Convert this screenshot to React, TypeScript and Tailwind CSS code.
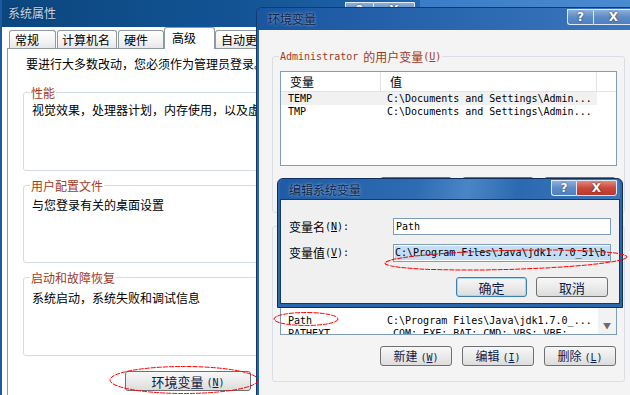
import React from "react";

const MONO = "font-['DejaVu_Sans_Mono',monospace] text-[10px]";

function Mn({ c }: { c: string }) {
  return (
    <span className="font-['DejaVu_Sans_Mono',monospace] text-[10px]">
      (<span className="underline underline-offset-[1px]">{c}</span>)
    </span>
  );
}

function TitleBtns({ red, wq, wx }: { red?: boolean; wq: string; wx: string }) {
  return (
    <div className="flex items-start">
      <div
        className={
          wq +
          " h-[16px] flex items-center justify-center rounded-bl-[3px] border border-[#dfe9f6] border-r-0 bg-[linear-gradient(180deg,#8fb0da,#5f8cc6_50%,#4e7fbf)] text-white text-[12px] font-bold font-['DejaVu_Sans',sans-serif] leading-none [text-shadow:0_0_2px_#1d3560]"
        }
      >
        ?
      </div>
      <div
        className={
          wx +
          " h-[16px] flex items-center justify-center rounded-br-[3px] border border-[#dfe9f6] text-white text-[12px] font-bold font-['DejaVu_Sans',sans-serif] leading-none [text-shadow:0_0_2px_#3a1a10] " +
          (red
            ? "bg-[linear-gradient(180deg,#e4897c,#c9493d_50%,#b8382c)]"
            : "bg-[linear-gradient(180deg,#8fb0da,#5f8cc6_50%,#4e7fbf)]")
        }
      >
        X
      </div>
    </div>
  );
}

function Btn({ w, children, def }: { w: string; children?: React.ReactNode; def?: boolean }) {
  return (
    <div
      className={
        w +
        " h-[20px] flex items-center justify-center rounded-[3px] border bg-[linear-gradient(180deg,#f7f7f7,#ebebeb_50%,#dcdcdc)] text-[#0c1c4c] text-[12px] leading-none " +
        (def ? "border-[#3c7fb1] shadow-[inset_0_0_0_1px_#a8d6f3]" : "border-[#707070]")
      }
    >
      {children}
    </div>
  );
}

function Tab({ w, sel, pl, children }: { w: string; sel?: boolean; pl: string; children: React.ReactNode }) {
  return (
    <div
      className={
        w +
        " " +
        pl +
        " flex items-center border border-b-0 rounded-t-[3px] text-[12px] leading-none " +
        (sel
          ? "relative z-10 h-[22px] -mb-[1px] bg-white border-[#919b9c] pb-[2px]"
          : "h-[18px] border-[#919b9c] bg-[linear-gradient(180deg,#ffffff,#f3f3f3_60%,#e4e7ec)]")
      }
    >
      {children}
    </div>
  );
}

type Row = { n: string; v: string; hl?: boolean };

function ListView({ rows, h, scroll }: { rows: Row[]; h: string; scroll?: boolean }) {
  return (
    <div className={"relative ml-[7px] w-[337px] border border-[#7f9db9] bg-white overflow-hidden " + h}>
      <div className="flex h-[20px] border-b border-[#e3e3e3] text-[12px] text-black">
        <div className="w-[100px] pl-[9px] flex items-center border-r border-[#e3e3e3]">{scroll ? "" : "变量"}</div>
        <div className="w-[216px] pl-[9px] flex items-center border-r border-[#e3e3e3]">{scroll ? "" : "值"}</div>
        <div className="flex-1" />
      </div>
      {rows.map((r, i) => (
        <div key={i} className={"flex h-[13px] items-center w-[316px] " + (r.hl ? "bg-[#f1f1f1]" : "")}>
          <div className={"w-[100px] pl-[7px] whitespace-pre text-black leading-none " + MONO}>{r.n}</div>
          <div className={"pl-[6px] whitespace-pre text-black leading-none " + MONO}>{r.v}</div>
        </div>
      ))}
      {scroll && (
        <div className="absolute right-0 top-[20px] bottom-0 w-[18px] bg-[#f2f2f2] flex flex-col justify-end">
          <div className="h-[17px] flex items-center justify-center text-[#6b6b6b] text-[8px] leading-none">▼</div>
        </div>
      )}
    </div>
  );
}

function GroupLabel({ bg, children }: { bg: string; children: React.ReactNode }) {
  return (
    <span
      className={
        "absolute -top-[9px] left-[6px] px-[1px] h-[17px] flex items-center text-[#a33a1c] text-[12px] leading-none whitespace-nowrap " +
        bg
      }
    >
      {children}
    </span>
  );
}

export default function App() {
  return (
    <div className="relative w-[630px] h-[395px] overflow-hidden bg-[linear-gradient(100deg,#1c5ca6,#3a7cc6_60%,#4f8fd3)] font-['Noto_Sans_CJK_SC',sans-serif] text-[12px] text-black">
      {/* System properties window */}
      <div className="absolute left-0 top-0 w-[420px] h-[420px] flex flex-col bg-[#fcfcfc] border-l-2 border-[#1b5aa3]">
        <div className="h-[27px] shrink-0 flex items-start bg-[linear-gradient(90deg,#0b477f,#135394_55%,#2266ad)]">
          <div className="pl-[6px] h-[26px] flex items-center text-[12px] text-[#c9d7ea] [text-shadow:0_0_2px_#06213f]">
            系统属性
          </div>
          <div className="ml-auto pr-[5px] pt-[2px]">
            <TitleBtns wq="w-[28px]" wx="w-[42px]" />
          </div>
        </div>
        <div className="h-[21px] shrink-0 flex items-end pl-[7px]">
          <Tab w="w-[47px]" pl="pl-[5px]">常规</Tab>
          <div className="w-[1px]" />
          <Tab w="w-[60px]" pl="pl-[4px]">计算机名</Tab>
          <div className="w-[1px]" />
          <Tab w="w-[46px]" pl="pl-[5px]">硬件</Tab>
          <Tab w="w-[51px]" pl="pl-[7px]" sel>
            高级
          </Tab>
          <Tab w="w-[70px]" pl="pl-[5px]">自动更新</Tab>
        </div>
        <div className="flex-1 ml-[5px] bg-white border border-[#919b9c] pl-[15px] pt-[6px]">
          <div className="pl-[3px] h-[17px] flex items-center whitespace-nowrap">要进行大多数改动，您必须作为管理员登录。</div>
          <div className="relative mt-[20px] w-[380px] h-[79px] border border-[#d5dbe4] rounded-[3px] pl-[8px] pt-[8px]">
            <GroupLabel bg="bg-white">性能</GroupLabel>
            <div className="h-[17px] flex items-center whitespace-nowrap">视觉效果，处理器计划，内存使用，以及虚</div>
          </div>
          <div className="relative mt-[14px] w-[380px] h-[78px] border border-[#d5dbe4] rounded-[3px] pl-[8px] pt-[10px]">
            <GroupLabel bg="bg-white">用户配置文件</GroupLabel>
            <div className="h-[17px] flex items-center whitespace-nowrap">与您登录有关的桌面设置</div>
          </div>
          <div className="relative mt-[14px] w-[380px] h-[79px] border border-[#d5dbe4] rounded-[3px] pl-[8px] pt-[11px]">
            <GroupLabel bg="bg-white">启动和故障恢复</GroupLabel>
            <div className="h-[17px] flex items-center whitespace-nowrap">系统启动，系统失败和调试信息</div>
          </div>
          <div className="mt-[15px] ml-[102px]">
            <Btn w="w-[126px]">
              <span className="text-[13px]">环境变量</span>
              <span className="ml-[3px]">
                <Mn c="N" />
              </span>
            </Btn>
          </div>
        </div>
      </div>

      {/* Environment variables window */}
      <div className="absolute left-[256px] top-[7px] w-[381px] h-[400px] flex flex-col rounded-tl-[6px] border-l border-t border-[#123a6c] bg-[#2a63a9]">
        <div className="h-[22px] shrink-0 flex items-start rounded-tl-[5px] bg-[linear-gradient(90deg,#1a56a0,#2a66ae_50%,#3a77bd)]">
          <div className="pl-[11px] h-[22px] flex items-center text-[12px] text-[#102447] [text-shadow:0_0_3px_#a9c7ec]">
            环境变量
          </div>
          <div className="ml-auto pr-[3px] pt-[1px]">
            <TitleBtns wq="w-[26px]" wx="w-[41px]" />
          </div>
        </div>
        <div className="flex-1 ml-[2px] bg-[#f4f4f4] pt-[26px]">
          <div className="relative ml-[13px] w-[353px] h-[157px] border border-[#dadfe5] rounded-[3px] pt-[14px]">
            <GroupLabel bg="bg-[#f4f4f4]">
              <span className={MONO}>Administrator</span>
              <span className="ml-[5px]">的用户变量</span>
              <Mn c="U" />
            </GroupLabel>
            <ListView
              h="h-[95px]"
              rows={[
                { n: "TEMP", v: "C:\\Documents and Settings\\Admin...", hl: true },
                { n: "TMP", v: "C:\\Documents and Settings\\Admin..." },
              ]}
            />
            <div className="flex gap-[10px] ml-[107px] mt-[11px]">
              <Btn w="w-[72px]" />
              <Btn w="w-[72px]" />
              <Btn w="w-[72px]" />
            </div>
          </div>
          <div className="relative ml-[13px] mt-[13px] w-[353px] h-[156px] border border-[#dadfe5] rounded-[3px] pt-[14px]">
            <ListView
              h="h-[94px]"
              scroll
              rows={[
                { n: "", v: "" },
                { n: "", v: "" },
                { n: "", v: "" },
                { n: "", v: "" },
                { n: "Path", v: "C:\\Program Files\\Java\\jdk1.7.0_..." },
                { n: "PATHEXT", v: ".COM;.EXE;.BAT;.CMD;.VBS;.VBE;..." },
              ]}
            />
            <div className="flex gap-[10px] ml-[107px] mt-[11px]">
              <Btn w="w-[72px]">
                新建
                <span className="ml-[3px]">
                  <Mn c="W" />
                </span>
              </Btn>
              <Btn w="w-[72px]">
                编辑
                <span className="ml-[3px]">
                  <Mn c="I" />
                </span>
              </Btn>
              <Btn w="w-[72px]">
                删除
                <span className="ml-[3px]">
                  <Mn c="L" />
                </span>
              </Btn>
            </div>
          </div>
        </div>
      </div>

      {/* Edit system variable dialog */}
      <div className="absolute left-[277px] top-[178px] w-[346px] h-[130px] flex flex-col rounded-t-[6px] border border-[#0f2f5c] bg-[#2b66ad] px-[2px] pb-[3px]">
        <div className="h-[20px] shrink-0 flex items-start rounded-t-[5px] bg-[linear-gradient(100deg,#1f5ca5,#2e6bb2_40%,#4a86c6_55%,#2d69b0_70%,#3a77bd)]">
          <div className="pl-[9px] h-[21px] flex items-center text-[12px] text-[#102447] [text-shadow:0_0_3px_#b0cdef]">
            编辑系统变量
          </div>
          <div className="ml-auto pr-[3px] pt-[1px]">
            <TitleBtns red wq="w-[25px]" wx="w-[41px]" />
          </div>
        </div>
        <div className="flex-1 bg-[#f0f0f0] border border-[#16396b] pt-[18px] pl-[8px]">
          <div className="flex items-center h-[17px]">
            <div className="w-[104px] flex items-center leading-none whitespace-nowrap">
              <span>变量名</span>
              <Mn c="N" />
              <span className={MONO}>:</span>
            </div>
            <div className="w-[218px] h-[17px] border border-[#7f9db9] bg-white pl-[2px] flex items-center leading-none">
              <span className={MONO}>Path</span>
            </div>
          </div>
          <div className="flex items-center h-[18px] mt-[9px]">
            <div className="w-[104px] flex items-center leading-none whitespace-nowrap">
              <span>变量值</span>
              <Mn c="V" />
              <span className={MONO}>:</span>
            </div>
            <div className="w-[218px] h-[18px] border border-[#7f9db9] bg-white px-[1px] flex items-center overflow-hidden">
              <span className={"bg-[#c3ddf4] whitespace-nowrap leading-[14px] " + MONO}>
                C:\Program Files\Java\jdk1.7.0_51\b.
              </span>
            </div>
          </div>
          <div className="flex gap-[9px] ml-[167px] mt-[15px]">
            <Btn w="w-[71px]" def>
              <span className="text-[13px]">确定</span>
            </Btn>
            <Btn w="w-[72px]">
              <span className="text-[13px]">取消</span>
            </Btn>
          </div>
        </div>
      </div>

      {/* Red hand-drawn annotations */}
      <svg className="absolute left-0 top-0 pointer-events-none" width="630" height="395" viewBox="0 0 630 395">
        <ellipse cx="184" cy="380" rx="74" ry="13.5" fill="none" stroke="#ff0000" strokeWidth="1" strokeDasharray="5 1" />
        <ellipse cx="506" cy="260" rx="121" ry="9.5" fill="none" stroke="#ff0000" strokeWidth="1" strokeDasharray="5 1" transform="rotate(-1.5 506 260)" />
        <ellipse cx="306" cy="319" rx="32" ry="6.5" fill="none" stroke="#ff0000" strokeWidth="1" strokeDasharray="5 1" />
      </svg>
    </div>
  );
}
